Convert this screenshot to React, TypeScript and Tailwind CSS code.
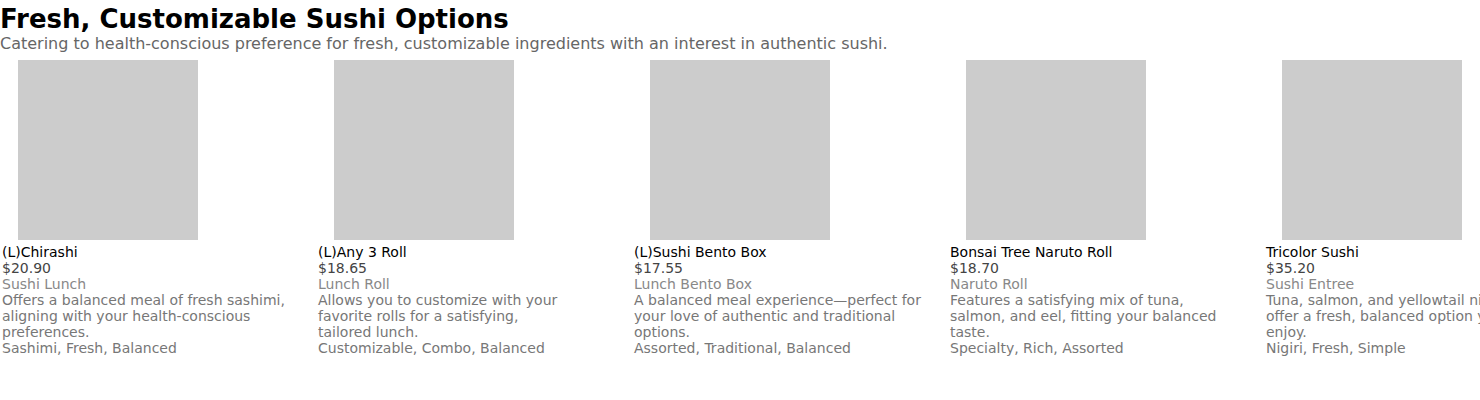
const items = [
  {
    name: "(L)Chirashi",
    price: "$20.90",
    category: "Sushi Lunch",
    description: "Offers a balanced meal of fresh sashimi, aligning with your health-conscious preferences.",
    tags: "Sashimi, Fresh, Balanced",
  },
  {
    name: "(L)Any 3 Roll",
    price: "$18.65",
    category: "Lunch Roll",
    description: "Allows you to customize with your favorite rolls for a satisfying, tailored\u00a0lunch.",
    tags: "Customizable, Combo, Balanced",
  },
  {
    name: "(L)Sushi Bento Box",
    price: "$17.55",
    category: "Lunch Bento Box",
    description: "A balanced meal experience\u2014perfect for your love of authentic and traditional options.",
    tags: "Assorted, Traditional, Balanced",
  },
  {
    name: "Bonsai Tree Naruto Roll",
    price: "$18.70",
    category: "Naruto Roll",
    description: "Features a satisfying mix of tuna, salmon, and eel, fitting your balanced taste.",
    tags: "Specialty, Rich, Assorted",
  },
  {
    name: "Tricolor Sushi",
    price: "$35.20",
    category: "Sushi Entree",
    description: "Tuna, salmon, and yellowtail nigiri offer\u00a0a fresh, balanced option you'll enjoy.",
    tags: "Nigiri, Fresh, Simple",
  },
];

export default function App() {
  return (
    <div className="w-[1480px] h-[400px] overflow-hidden bg-white font-['DejaVu_Sans',sans-serif]">
      <h1 className="text-[26px] leading-[30px] font-bold text-black pt-[4px]">
        Fresh, Customizable Sushi Options
      </h1>
      <p className="text-[16px] leading-[19px] text-[#666]">
        Catering to health-conscious preference for fresh, customizable ingredients with an interest in authentic sushi.
      </p>
      <div className="flex gap-[16px] mt-[7px] px-[2px]">
        {items.map((item) => (
          <div key={item.name} className="w-[300px] shrink-0">
            <div className="w-[180px] h-[180px] bg-[#ccc] ml-[16px]" />
            <div className="mt-[4px] text-[14px] leading-[16px]">
              <div className="text-black">{item.name}</div>
              <div className="text-[#444]">{item.price}</div>
              <div className="text-[#888]">{item.category}</div>
              <div className="text-[#777] w-[288px]">{item.description}</div>
              <div className="text-[#777]">{item.tags}</div>
            </div>
          </div>
        ))}
      </div>
    </div>
  );
}
